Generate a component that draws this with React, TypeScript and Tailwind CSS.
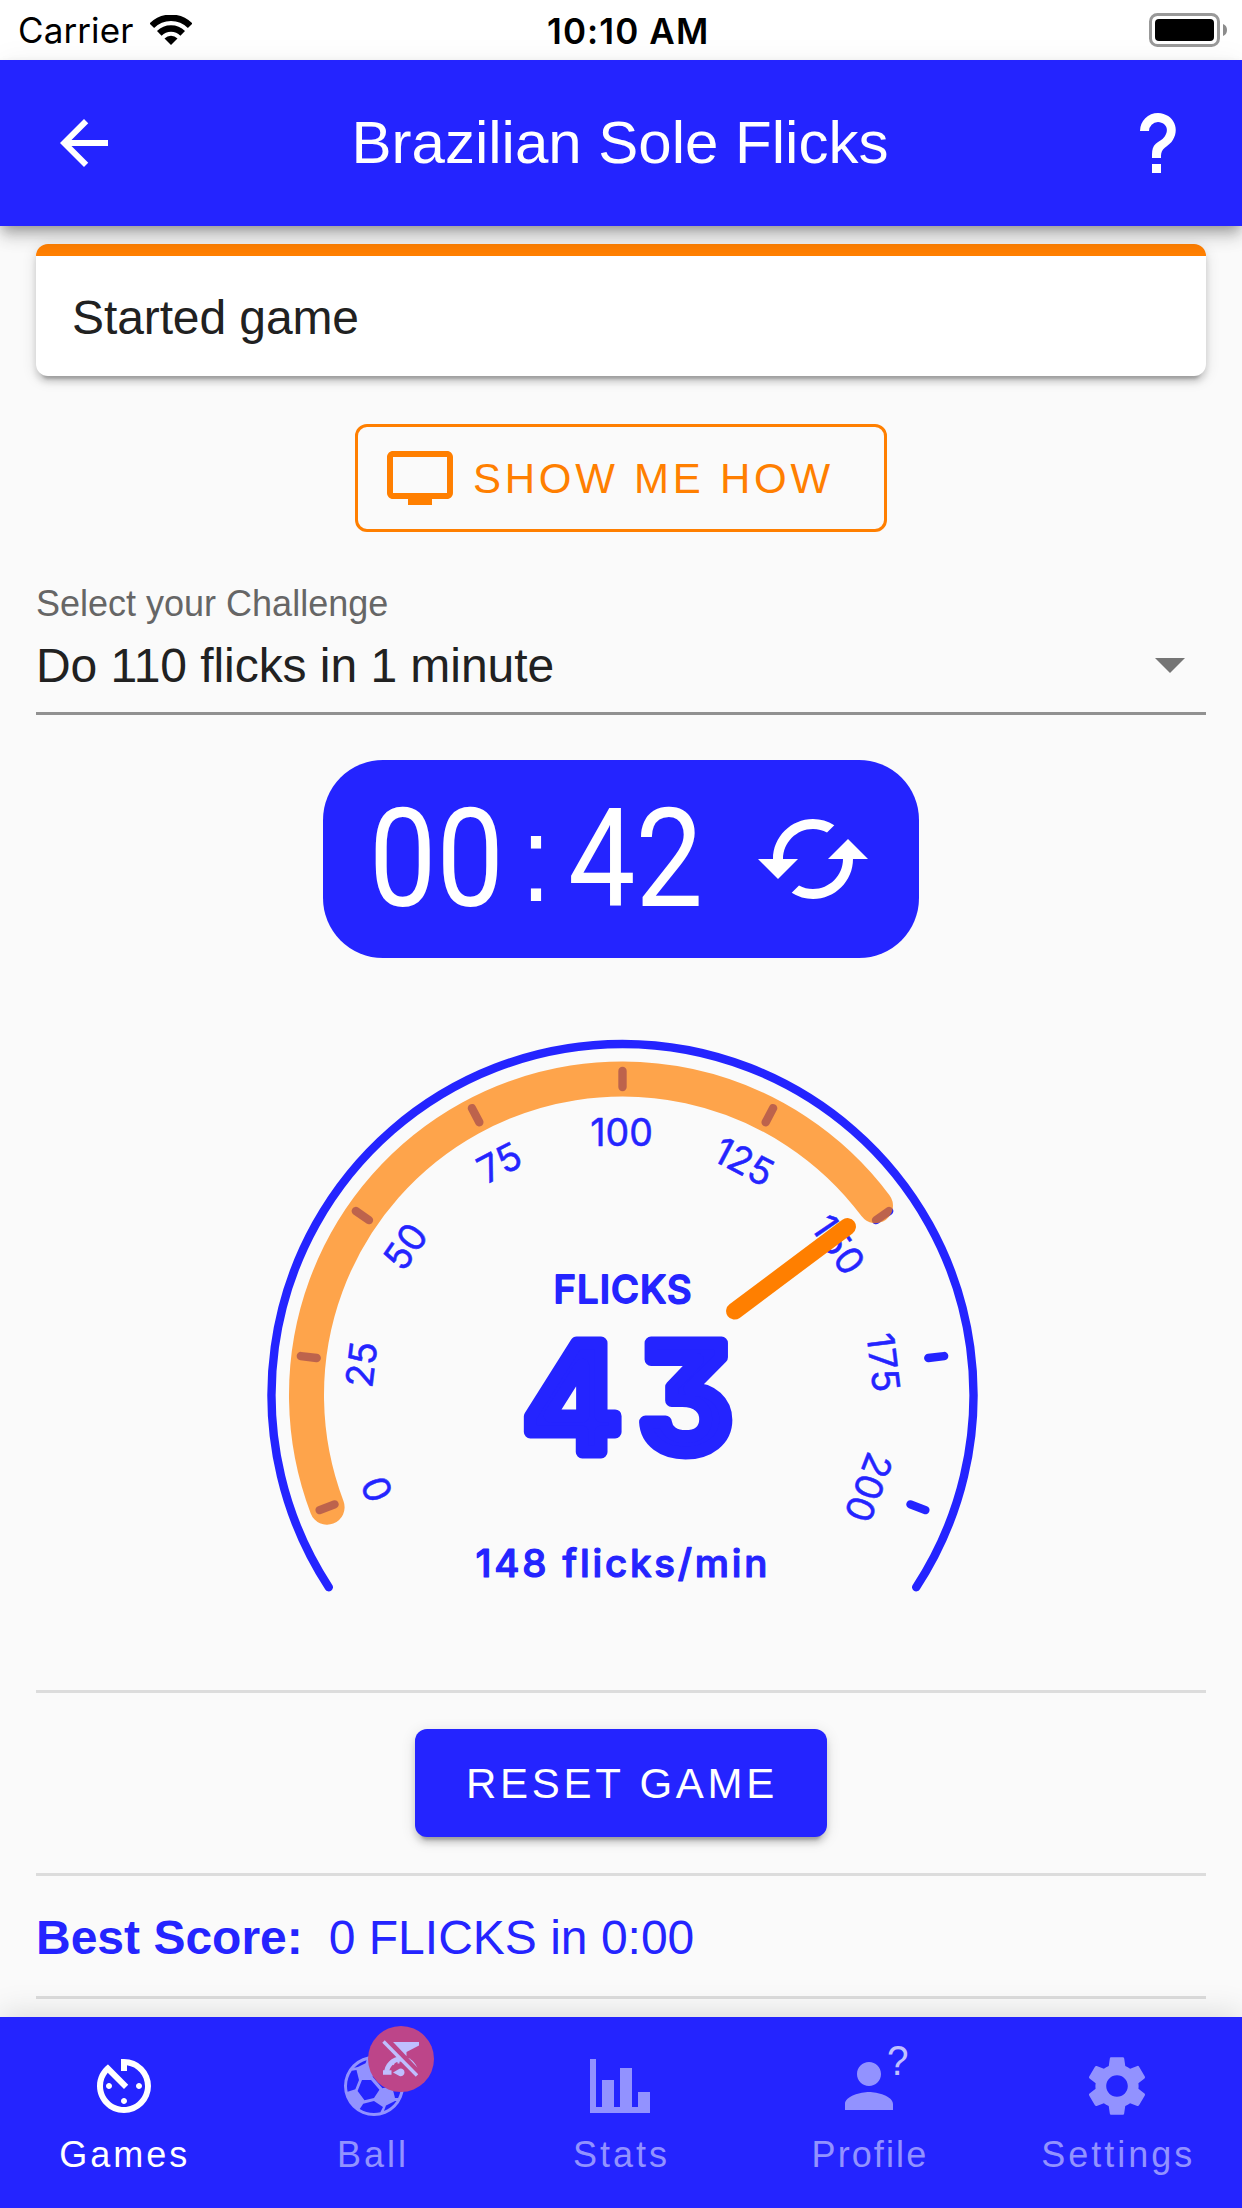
import React from 'react';
import { MdArrowBack, MdAvTimer, MdCached, MdPerson, MdSettings, MdTv } from 'react-icons/md';

const BLUE = '#2424ff';
const ORANGE = '#ff7f00';

const MAX_VALUE = 200;
const MAX_ANGLE = 110.8;

// degrees clockwise from 12 o'clock
const toAngle = (value: number) => (value / MAX_VALUE) * MAX_ANGLE * 2 - MAX_ANGLE;

const polar = (radius: number, angle: number) => {
    const rad = (angle * Math.PI) / 180;
    return { x: radius * Math.sin(rad), y: -radius * Math.cos(rad) };
};

const arcPath = (radius: number, from: number, to: number) => {
    const a = polar(radius, from);
    const b = polar(radius, to);
    const large = to - from > 180 ? 1 : 0;
    return `M${a.x} ${a.y}A${radius} ${radius} 0 ${large} 1 ${b.x} ${b.y}`;
};

const StatusBar: React.FC = () => (
    <div className="relative flex h-[60px] items-center justify-between bg-white pl-[18px] pr-[14px] font-['Inter'] text-black">
        <div className="flex items-center gap-[17px]">
            <span className="w-[115px] whitespace-nowrap text-[35px] tracking-[0.1px]">Carrier</span>
            <svg className="-mt-[1px] h-[30px] w-[42px]" viewBox="0 0 42 30" fill="none" stroke="#000">
                <path d="M1.8 10.8A27 27 0 0 1 40.2 10.8" strokeWidth="6.500" />
                <path d="M9.3 18.4A16.5 16.5 0 0 1 32.7 18.4" strokeWidth="6.500" />
                <path d="M21 30l-6.5-6.600a9.200 9.200 0 0 1 13 0z" fill="#000" stroke="none" />
            </svg>
        </div>
        <span className="absolute left-[547px] top-[9px] whitespace-nowrap text-[35px] font-semibold leading-[44px] tracking-[1.1px]">
            10:10 AM
        </span>
        <svg className="h-[34px] w-[79px]" viewBox="0 0 79 34">
            <rect x="1.5" y="1.5" width="68" height="31" rx="7" fill="none" stroke="#999" strokeWidth="3" />
            <rect x="6" y="6" width="59" height="22" rx="4" fill="#000" />
            <path d="M74 11a6.500 6.500 0 0 1 0 12z" fill="#8c8c8c" />
        </svg>
    </div>
);

const Header: React.FC = () => (
    <header className="relative z-10 flex h-[166px] items-center justify-between bg-[#2424ff] px-12 text-white shadow-[0_6px_12px_-3px_rgba(0,0,0,0.3),0_12px_15px_rgba(0,0,0,0.14),0_3px_30px_rgba(0,0,0,0.06)]">
        <MdArrowBack className="size-[72px]" />
        <h1 className="-ml-[2px] whitespace-nowrap text-[60px] leading-[72px]">Brazilian Sole Flicks</h1>
        <svg className="size-[72px]" viewBox="0 0 24 24" fill="currentColor">
            <path d="M10,19H13V22H10V19M12,2C17.35,2.22 19.68,7.62 16.5,11.67C15.67,12.67 14.33,13.33 13.67,14.17C13,15 13,16 13,17H10C10,15.33 10,13.92 10.67,12.92C11.33,11.92 12.67,11.33 13.5,10.67C15.92,8.43 15.32,5.26 12,5A3,3 0 0,0 9,8H6A6,6 0 0,1 12,2Z" />
        </svg>
    </header>
);

const Timer: React.FC = () => (
    <div className="mx-auto mt-[45px] flex h-[198px] w-[596px] items-center rounded-[60px] bg-[#2424ff] pl-[46px] text-white">
        <div className="w-[384px]">
            <div className="flex origin-left scale-x-[0.87] whitespace-pre font-['Roboto'] text-[138px] leading-[198px]">
                <span>00</span>
                <span className="w-[84px] text-center font-['Liberation_Sans'] text-[122px]">:</span>
                <span>42</span>
            </div>
        </div>
        <MdCached className="size-[120px]" />
    </div>
);

const Gauge: React.FC<{ count: number; rate: number }> = ({ count, rate }) => {
    const steps = Array.from({ length: 9 }, (_, i) => i * 25);
    const needle = toAngle(rate);
    const start = polar(140, needle);
    const end = polar(281, needle);

    return (
        <svg
            className="mx-auto mt-[77px] block h-[570px] w-[720px] font-['Inter']"
            viewBox="-361.5 -360 720 570"
            fill="none"
            strokeLinecap="round"
            strokeLinejoin="round"
        >
            <path d={arcPath(351, -123.2, 123.2)} stroke={BLUE} strokeWidth="8.4" />
            {steps.map((step) => {
                const angle = toAngle(step);
                const a = polar(308, angle);
                const b = polar(324, angle);
                return (
                    <g key={step}>
                        <line x1={a.x} y1={a.y} x2={b.x} y2={b.y} stroke={BLUE} strokeWidth="8.4" />
                        <text
                            transform={`rotate(${angle}) translate(-1 -249.500)`}
                            textAnchor="middle"
                            fontSize="37.5"
                            fill={BLUE}
                            stroke={BLUE}
                            strokeWidth="0.5"
                            letterSpacing="0"
                        >
                            {step}
                        </text>
                    </g>
                );
            })}
            <path d={arcPath(316, -MAX_ANGLE, needle)} stroke={ORANGE} strokeOpacity="0.7" strokeWidth="35" />
            <line x1={start.x} y1={start.y} x2={end.x} y2={end.y} stroke={ORANGE} strokeWidth="17" />
            <g fill={BLUE} stroke={BLUE} fontWeight="500">
                <text x="-69" y="-92.500" fontSize="38" textLength="138" strokeWidth="1.800">FLICKS</text>
                {/* cv09 = flat-top three */}
                <text
                    className="[font-feature-settings:'cv09']"
                    x="-100"
                    y="57"
                    fontSize="150"
                    fontWeight="600"
                    textLength="211"
                    strokeWidth="13"
                >
                    {count}
                </text>
                <text x="-147" y="182" fontSize="38.5" textLength="292" strokeWidth="1.200">{rate} flicks/min</text>
            </g>
        </svg>
    );
};

const BallIcon: React.FC = () => (
    <div className="relative ml-[2px] size-[72px]">
        <svg className="size-[72px]" viewBox="0 0 24 24" fill="#9292ff">
            <path d="M12,2A10,10 0 0,0 2,12A10,10 0 0,0 12,22A10,10 0 0,0 22,12A10,10 0 0,0 12,2M12,3C13.76,3 15.4,3.53 16.78,4.41L16.5,5H13L12,5L10.28,4.16L10.63,3.13C11.08,3.05 11.53,3 12,3M9.53,3.38L9.19,4.41L6.63,5.69L5.38,5.94C6.5,4.73 7.92,3.84 9.53,3.38M13,6H16L18.69,9.59L17.44,12.16L14.81,12.78L11.53,8.94L13,6M6.16,6.66L7,10L5.78,13.06L3.22,13.94C3.08,13.31 3,12.67 3,12C3,10.1 3.59,8.36 4.59,6.91L6.16,6.66M20.56,9.22C20.85,10.09 21,11.03 21,12C21,13.44 20.63,14.79 20.03,16H19L18.16,12.66L19.66,9.66L20.56,9.22M8,10H11L13.81,13.28L12,16L8.84,16.78L6.53,13.69L8,10M12,17L15,19L14.13,20.72C13.44,20.88 12.73,21 12,21C10.25,21 8.63,20.5 7.25,19.63L8.41,17.91L12,17M19,17H19.5C18.5,18.5 17,19.67 15.31,20.34L16,18.53L19,17Z" />
        </svg>
        {/* disconnected scale badge */}
        <div className="absolute left-[30px] top-[-24px] size-[66px] rounded-full bg-[#bd4589]">
            <svg className="size-full" viewBox="0 0 66 66">
                <path d="M23.500 16H51v3.500L38.500 26v4h-3z" fill="#bfbfff" />
                <path d="M32 30.500a17 17 0 0 1 18 14.500v3z" fill="#bfbfff" />
                <path d="M18.500 47.800a14.500 14.500 0 0 1 15-14.800" fill="none" stroke="#bfbfff" strokeWidth="5" />
                <path d="M16 45.300h6.500v2.500H16zM22.500 35l3.500 3.500M30.500 32v5.500" fill="#bfbfff" stroke="#bfbfff" strokeWidth="2" />
                <path d="M25 46.500l6.500-3.700a3.800 3.800 0 1 1 0 7.200z" fill="#bfbfff" />
                <path d="M21 16l30 31.500" stroke="#bd4589" strokeWidth="6" />
                <path d="M15.500 15.500l33.500 34" stroke="#bfbfff" strokeWidth="3.400" />
            </svg>
        </div>
    </div>
);

const ProfileIcon: React.FC = () => (
    <div className="relative size-[72px]">
        <MdPerson className="size-[72px]" />
        <span className="absolute left-[54px] top-[-14px] origin-left scale-x-90 text-[43px] leading-[48px] text-[#c0c0ff]">?</span>
    </div>
);

const tabs = [
    { label: 'Games', icon: <MdAvTimer className="size-[72px]" />, active: true },
    { label: 'Ball', icon: <BallIcon /> },
    {
        label: 'Stats',
        icon: (
            <svg className="-ml-[2px] size-[72px]" viewBox="0 0 24 24" fill="currentColor">
                <path d="M22,21H2V3H4V19H6V10H10V19H12V6H16V19H18V14H22V21Z" />
            </svg>
        ),
    },
    { label: 'Profile', icon: <ProfileIcon /> },
    { label: 'Settings', icon: <MdSettings className="-ml-[2px] size-[72px]" /> },
];

const TabBar: React.FC = () => (
    <nav className="relative z-10 grid h-[191px] grid-cols-5 bg-[#2424ff] shadow-[0_-3px_30px_rgba(0,0,0,0.13)]">
        {tabs.map((tab) => (
            <div
                key={tab.label}
                className={`flex flex-col items-center pt-[33px] ${tab.active ? 'text-white' : 'text-[#9292ff]'}`}
            >
                {tab.icon}
                <span
                    className={`mt-[12px] pl-[1px] text-[36px] leading-[42px] ${
                        tab.label === 'Profile' ? 'tracking-[2.1px]' : 'tracking-[3px]'
                    }`}
                >
                    {tab.label}
                </span>
            </div>
        ))}
    </nav>
);

export default function App() {
    return (
        <div className="flex h-[2208px] w-[1242px] flex-col overflow-hidden bg-[#fafafa] font-['Liberation_Sans',sans-serif]">
            <StatusBar />
            <Header />
            <main className="flex min-h-0 flex-1 flex-col overflow-hidden px-9 pt-[18px]">
                <div className="h-[132px] shrink-0 rounded-xl border-t-[12px] border-[#ff7f00] bg-white px-9 text-[48px] leading-[124px] tracking-[-0.1px] text-[#212121] shadow-[0_9px_3px_-6px_rgba(0,0,0,0.2),0_6px_6px_rgba(0,0,0,0.14),0_3px_15px_rgba(0,0,0,0.12)]">
                    Started game
                </div>

                <button className="mx-auto mt-12 flex h-[108px] w-[532px] shrink-0 items-center gap-[17px] rounded-xl border-[3px] border-[#ff7f00] pl-[26px] text-[#ff7f00]">
                    <MdTv className="size-[72px]" />
                    <span className="whitespace-nowrap text-[42px] tracking-[3.75px]">SHOW ME HOW</span>
                </button>

                <div className="mt-[51px] border-b-[3px] border-[#919191]">
                    <div className="text-[36px] leading-[42px] text-[#666]">Select your Challenge</div>
                    <div className="flex h-[87px] items-center justify-between pr-[21px] text-[48px] leading-[54px] tracking-[-0.05px] text-[#212121]">
                        <span className="-mt-[5px]">Do 110 flicks in 1 minute</span>
                        <svg className="-mt-[7px] h-[15px] w-[30px]" viewBox="0 0 30 15">
                            <path d="M0 0h30L15 15z" fill="#757575" />
                        </svg>
                    </div>
                </div>

                <Timer />
                <Gauge count={43} rate={148} />

                <div className="mt-[85px] h-[3px] shrink-0 bg-[#dcdcdc]" />
                <button className="mx-auto mt-9 h-[108px] w-[412px] shrink-0 rounded-xl bg-[#2424ff] pl-[2px] text-[42px] tracking-[3.75px] text-white shadow-[0_9px_3px_-6px_rgba(0,0,0,0.2),0_6px_6px_rgba(0,0,0,0.14),0_3px_15px_rgba(0,0,0,0.12)]">
                    RESET GAME
                </button>
                <div className="mt-9 h-[3px] shrink-0 bg-[#dcdcdc]" />
                <div className="flex h-[120px] shrink-0 items-center gap-[26px] pt-[4px] text-[48px] text-[#2424ff]">
                    <span className="font-bold">Best Score:</span>
                    <span>0 FLICKS in 0:00</span>
                </div>
                <div className="h-[3px] shrink-0 bg-[#dcdcdc]" />
            </main>
            <TabBar />
        </div>
    );
}
